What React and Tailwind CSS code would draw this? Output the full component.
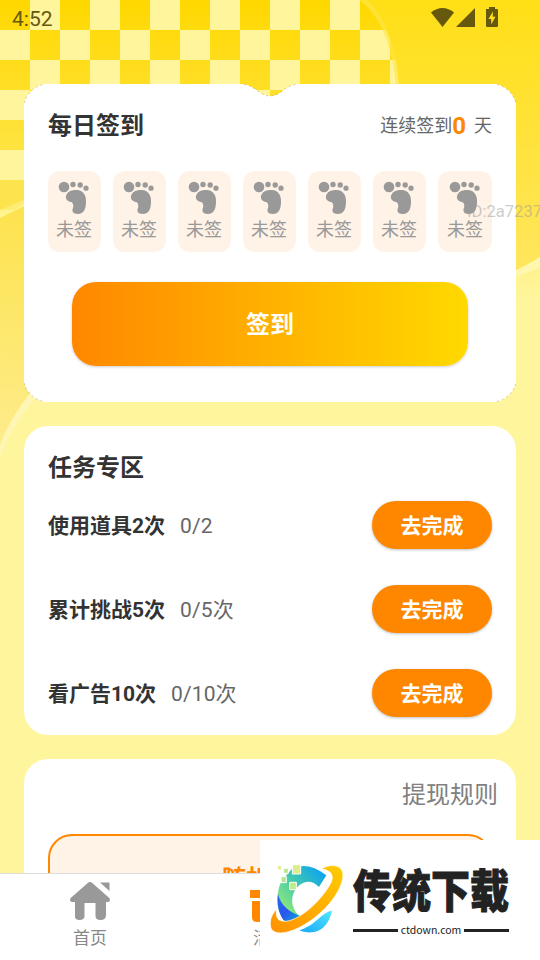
const font = "font-[Roboto,'Noto_Sans_CJK_SC',sans-serif]";

const tasks = [
  { title: '使用道具2次', progress: '0/2' },
  { title: '累计挑战5次', progress: '0/5次' },
  { title: '看广告10次', progress: '0/10次' },
];

function Backdrop() {
  const squares = [];
  for (let row = 0; row < 6; row += 1) {
    for (let col = 0; col < 14; col += 1) {
      if ((row + col) % 2 === 1) {
        squares.push(<rect key={`${row}-${col}`} x={col * 30} y={row * 30} width="30" height="30" fill="#fff59d" />);
      }
    }
  }
  return (
    <svg className="absolute inset-0 h-[960px] w-[540px]" viewBox="0 0 540 960" aria-hidden="true">
      <defs>
        <linearGradient id="left" x1="0" y1="0" x2="0" y2="180" gradientUnits="userSpaceOnUse">
          <stop offset="0" stopColor="#ffd800" />
          <stop offset="1" stopColor="#ffe64e" />
        </linearGradient>
        <linearGradient id="right" x1="0" y1="0" x2="0" y2="270" gradientUnits="userSpaceOnUse">
          <stop offset="0" stopColor="#ffdf16" />
          <stop offset="1" stopColor="#ffe65e" />
        </linearGradient>
        <linearGradient id="lower" x1="20" y1="210" x2="0" y2="450" gradientUnits="userSpaceOnUse">
          <stop offset="0" stopColor="#fde34e" />
          <stop offset="1" stopColor="#feec8c" />
        </linearGradient>
        <linearGradient id="fade" x1="0" y1="262" x2="0" y2="300" gradientUnits="userSpaceOnUse">
          <stop offset="0" stopColor="#fff28a" />
          <stop offset="1" stopColor="#fff59d" />
        </linearGradient>
        <clipPath id="checks">
          <path d="M0 0H360C385 15 399 50 399 100V180H0Z" />
        </clipPath>
      </defs>
      <rect width="540" height="960" fill="#fff59d" />
      <path d="M340 0H540V257Q528 266 500 278H340Z" fill="url(#right)" />
      <path d="M540 257Q528 265 510 273V300H540Z" fill="url(#fade)" />
      <path d="M540 257Q528 265 510 273V279Q528 272 540 268Z" fill="#fff7ae" />
      <path d="M0 0H360C385 15 399 50 399 100V180H0Z" fill="url(#left)" />
      <g clipPath="url(#checks)">{squares}</g>
      <path d="M359 0H366C388 18 398 55 399 90H396C394 50 381 15 359 0Z" fill="#ffe748" fillOpacity=".65" />
      <path d="M0 180H50V380C26 400 10 425 0 450Z" fill="url(#lower)" />
      <path d="M0 210H14Q20 206 24 204V206Q12 212 0 218Z" fill="#fff48e" />
      <path d="M0 210Q12 205 24 200V206Q12 212 0 218Z" fill="#fff48e" fillOpacity=".6" />
      <path d="M30 393Q10 418 0 445V457Q12 424 40 394Z" fill="#fff6b4" />
    </svg>
  );
}

function StatusBar() {
  return (
    <header className="relative flex h-9 items-center justify-between pr-10 pl-3 text-[#66590e]">
      <span className="pt-0.5 text-[21px] leading-none">4:52</span>
      <svg className="h-9 w-[72px]" viewBox="428 0 72 36" fill="currentColor" aria-hidden="true">
        <path d="M431 12.5C438 6.500 447 6.500 454 12.500L442.500 27Z" />
        <path d="M475 8V27H456Z" />
        <path fillRule="evenodd" d="M486 9H489V7H495V9H497Q498 9 498 10V26Q498 27 497 27H487Q486 27 486 26ZM492.800 11.500L488.500 19H491.200V24.500L495.500 16.800H492.800Z" />
      </svg>
    </header>
  );
}

function Footprint() {
  return (
    <svg className="h-[34px] w-8" viewBox="0 0 32 34" fill="#999" aria-hidden="true">
      <circle cx="6" cy="6" r="5.300" />
      <circle cx="15" cy="3.500" r="2.700" />
      <circle cx="22.200" cy="4" r="2.700" />
      <circle cx="28" cy="7.200" r="2.600" />
      <path d="M8 15C9 10.500 14 8.500 19 9C25 9.500 28 14 28 20C28 25 27.500 33 19.500 33C15 33 13.500 30 15 27C15.700 25 15.300 22.500 13.500 21C10.500 21 7.200 18.500 8 15Z" />
    </svg>
  );
}

function CheckInCard() {
  return (
    <section className="relative h-[318px] shrink-0 px-6">
      <svg className="absolute inset-0 h-[318px] w-[492px]" viewBox="0 0 492 318" aria-hidden="true">
        <path
          d="M19 0H217C231 0 234 12 246 12S261 0 275 0H473Q488 5 492 19V299Q488 313 473 318H19Q4 313 0 299V19Q4 5 19 0Z"
          fill="#fff"
        />
        <path
          d="M0 19Q4 5 19 .5M220 .5C232 2 236 12 246 12S260 2 272 .5M473 .5Q488 5 492 19M0 299Q4 313 19 317.500M473 317.500Q488 313 492 299"
          fill="none"
          stroke="#98802f"
          strokeOpacity=".5"
          strokeWidth=".8"
          strokeDasharray="2 3"
        />
      </svg>
      <div className="relative flex h-[87px] items-center justify-between pb-1">
        <h2 className="text-2xl font-bold text-[#333]">每日签到</h2>
        <p className="flex items-center text-lg text-[#666]">
          连续签到<b className="mr-2 text-2xl leading-none text-[#ff8700]">0</b>天
        </p>
      </div>
      <ul className="relative flex gap-3">
        {Array.from({ length: 7 }, (_, day) => (
          <li key={day} className="flex h-[81px] w-[53px] flex-col items-center rounded-xl bg-[#fff2e6] pt-[10px] pr-px last:w-[54px] last:pr-0">
            <Footprint />
            <span className="mt-px text-lg leading-7 text-[#999]">未签</span>
          </li>
        ))}
      </ul>
      <button className="relative mt-[30px] ml-6 block h-[84px] w-[396px] rounded-3xl bg-linear-to-r from-[#ff8700] to-[#ffd900] pt-0.5 text-2xl font-bold text-white shadow-[0_1px_3px_rgba(0,0,0,0.2)]">
        签到
      </button>
    </section>
  );
}

function TaskCard() {
  return (
    <section className="h-[309px] shrink-0 rounded-3xl bg-white px-6 pt-6">
      <h2 className="h-[51px] text-2xl leading-9 font-bold text-[#333]">任务专区</h2>
      <ul className="flex flex-col gap-9">
        {tasks.map((task) => (
          <li key={task.title} className="flex h-12 items-center text-[21px]">
            <b className="pt-1 text-[#333]">{task.title}</b>
            <span className="ml-[15px] pt-1 tracking-[0.1px] text-[#666]">{task.progress}</span>
            <button className="ml-auto h-12 w-[120px] rounded-full bg-[#ff8700] pt-1 font-bold text-white shadow-[0_1px_3px_rgba(0,0,0,0.25)]">
              去完成
            </button>
          </li>
        ))}
      </ul>
    </section>
  );
}

function WithdrawCard() {
  return (
    <section className="h-[240px] shrink-0 rounded-t-3xl bg-white px-6 pt-[18px]">
      <p className="-mr-1.5 h-[57px] text-right text-2xl leading-9 text-[#808080]">提现规则</p>
      <div className="h-40 rounded-3xl border-2 border-[#ff8700] bg-[#fff2e6] pt-[27px] text-center text-2xl font-bold text-[#ff8700]">
        随机金额
      </div>
    </section>
  );
}

function TabBar() {
  return (
    <nav className="absolute inset-x-0 bottom-0 grid h-[87px] grid-cols-3 border-t border-[#ddd] bg-white text-[17px] text-[#888]">
      <div className="flex flex-col items-center pt-2">
        <svg className="h-[38px] w-10" viewBox="0 0 40 38" fill="#999" aria-hidden="true">
          <path d="M18 .800Q20 -.800 22 .800L39.300 16Q41 18.500 38.500 20H36V33.500Q35.500 38 30.500 38T25.500 34V21H14.500V34Q14.500 38 9.500 38T5 33.500V20H1.500Q-1 18.500 .700 16Z" />
          <path d="M30 .500H39.500V9Z" />
        </svg>
        <span className="mt-1 leading-7">首页</span>
      </div>
      <div className="flex flex-col items-center pt-2">
        <svg className="h-10 w-10" viewBox="0 0 40 40" fill="#ff8700" aria-hidden="true">
          <path d="M0 8H40V16H0ZM2 19H38V35Q38 40 33 40H7Q2 40 2 35ZM10 1H16V8H10Z" />
        </svg>
        <span className="mt-0.5 leading-7">活动</span>
      </div>
    </nav>
  );
}

function Emblem() {
  return (
    <svg className="absolute top-[18px] left-1 h-[82px] w-[90px]" viewBox="0 0 270 246" aria-hidden="true">
      <defs>
        <linearGradient id="ring" x1="1" y1="0" x2="0" y2="1">
          <stop stopColor="#ffcc00" />
          <stop offset="1" stopColor="#ff9000" />
        </linearGradient>
        <linearGradient id="arc" x1="185" y1="40" x2="60" y2="150" gradientUnits="userSpaceOnUse">
          <stop stopColor="#08a0f5" />
          <stop offset=".55" stopColor="#42c9ad" />
          <stop offset="1" stopColor="#8be67d" />
        </linearGradient>
        <linearGradient id="base" x1="42" y1="120" x2="110" y2="180" gradientUnits="userSpaceOnUse">
          <stop stopColor="#2467f3" />
          <stop offset=".5" stopColor="#2857ef" />
          <stop offset="1" stopColor="#149ed9" />
        </linearGradient>
        <linearGradient id="tail" x1="1" y1="0" x2="0" y2="1">
          <stop stopColor="#52e5ff" />
          <stop offset="1" stopColor="#18a9f5" />
        </linearGradient>
      </defs>
      <path d="M84 32Q132 9 187 52L165 87Q142 64 119 74C94 84 80 112 86 141Q92 164 112 180L63 190C38 164 32 112 53 68Z" fill="url(#arc)" />
      <path d="M42 108Q54 158 116 176L91 188Q73 194 59 187C44 165 38 139 42 108Z" fill="url(#base)" />
      <path d="M204 158Q186 160 158 187Q135 208 106 217Q123 226 151 222Q192 212 204 158Z" fill="url(#tail)" />
      <path d="M173 32C208 13 243 24 236 61C227 116 160 187 91 215C50 231 17 229 19 195Q19 173 38 154C34 179 41 190 64 190C113 187 182 116 203 70Q213 39 173 32Z" fill="url(#ring)" stroke="#fff" strokeWidth="2" />
      <g stroke="#fff" strokeWidth="3">
        <path d="M85 20H110V48H85Z" fill="#dced8c" />
        <path d="M59 31H73V46H59Z" fill="#b8e786" />
        <path d="M51 56H67V74H51Z" fill="#aee891" />
        <path d="M77 73H97V95H77Z" fill="#bded84" />
        <path d="M40 23H53V36H40Z" fill="#e7ed94" />
      </g>
    </svg>
  );
}

function DownloadBadge() {
  return (
    <aside className="absolute right-0 bottom-0 h-[120px] w-[280px] bg-white text-[#222]">
      <Emblem />
      <div className="ml-[93px] flex w-[156px] flex-col pt-[27px]">
        <strong className="h-[52px] origin-center scale-y-[1.17] text-[39px] leading-[52px] font-black whitespace-nowrap [-webkit-text-stroke:0.8px_#222]">
          传统下载
        </strong>
        <div className="mt-[2px] flex items-center justify-between font-['Noto_Sans_CJK_SC',sans-serif] text-[10.5px] leading-[18px]">
          <i className="h-[3px] w-[45px] bg-[#222]" />
          ctdown.com
          <i className="h-[3px] w-[45px] bg-[#222]" />
        </div>
      </div>
    </aside>
  );
}

export default function App() {
  return (
    <main className={`relative h-[960px] w-[540px] overflow-hidden bg-[#fff59d] ${font}`}>
      <Backdrop />
      <StatusBar />
      <div className="relative mt-12 flex flex-col gap-6 px-6">
        <CheckInCard />
        <TaskCard />
        <WithdrawCard />
      </div>
      <span className="absolute top-[202px] left-[467px] text-[16.6px] leading-5 whitespace-nowrap text-[#999]/50">ID:2a7237</span>
      <TabBar />
      <DownloadBadge />
    </main>
  );
}
